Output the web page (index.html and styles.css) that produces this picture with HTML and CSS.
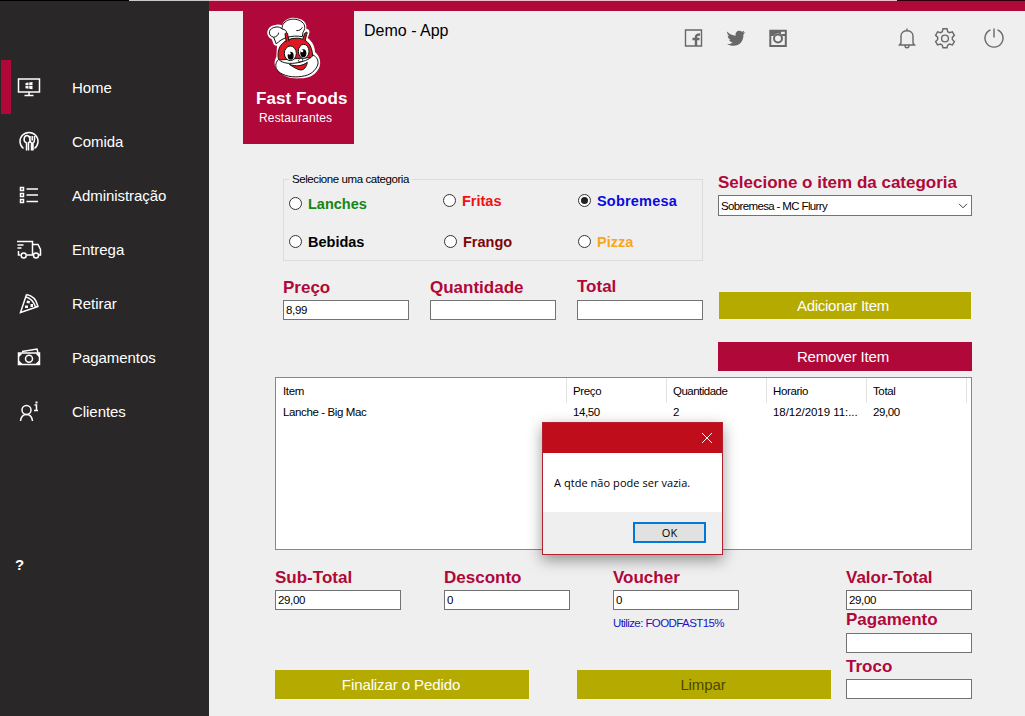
FILE: index.html
```html
<!DOCTYPE html>
<html lang="pt-BR">
<head>
<meta charset="utf-8">
<title>Demo - App</title>
<link rel="stylesheet" href="styles.css">
</head>
<body>
<div class="window-edge"><i class="edge-left"></i><i class="edge-grey"></i><i class="edge-pink"></i><i class="edge-right"></i></div>
<div class="app">
  <nav class="sidebar">
    <a class="nav-item active"><svg viewBox="0 0 26 26"><path d="M2.500 5h21v13h-21zM13 18v3M8.500 21.500h9"/><path class="solid" d="M9.500 9l3-.4v2.700h-3zM13.200 8.500l3.300-.5v3.300h-3.300zM9.500 12h3v2.700l-3-.4zM13.200 12h3.300v3.300l-3.300-.5z"/></svg><span>Home</span></a>
    <a class="nav-item"><svg viewBox="0 0 26 26"><path d="M7.500 20.500A9 9 0 1 1 18.500 20.500M10.500 22.500V15C6.500 13.500 8 7.500 11 7.500s4 6 1.500 7.500v7.500M15.500 22.500V15c-2-1-1.500-3-1.500-7M18.500 8c0 4 .5 6-1.500 7v7.500M16.200 8v4.500"/></svg><span>Comida</span></a>
    <a class="nav-item"><svg viewBox="0 0 26 26"><path d="M4.500 5.500h3v3h-3zM4.500 11.500h3v3h-3zM4.500 17.500h3v3h-3zM10.500 7H22M10.500 13H22M10.500 19.500H22"/></svg><span>Administração</span></a>
    <a class="nav-item"><svg viewBox="0 0 26 26"><path d="M1 5.500h15.500V19H11M1.500 9h6M1.500 12h4M2.500 15v4h2M16.500 8.500h5.500l2.500 5v5.500h-2M16.500 19h1"/><circle cx="7.700" cy="19.500" r="2.500"/><circle cx="20" cy="19.500" r="2.500"/></svg><span>Entrega</span></a>
    <a class="nav-item"><svg viewBox="0 0 26 26"><path d="M10.500 4.500L4.500 22.500 22 16.500M10.500 4.500C16.500 5.500 20.500 10 22 16.500l-2.500.5C18 12 15 8.500 10 7"/><path class="solid" d="M11 10.500l3 .5-.5 2.500-3-.5zM9 15.500h3v2.500h-3zM14.500 14h2.500v3h-2.500z"/></svg><span>Retirar</span></a>
    <a class="nav-item"><svg viewBox="0 0 26 26"><path d="M2.500 9h21v11.500h-21zM6 7.500L21 5l1 4"/><circle cx="13" cy="14.700" r="3.500"/><path class="solid" d="M3 9.500h3.500L3 13zM23 9.500h-3.500l3.500 3.500zM3 20h3.500L3 16.500zM23 20h-3.500l3.500-3.500z"/></svg><span>Pagamentos</span></a>
    <a class="nav-item"><svg viewBox="0 0 26 26"><circle cx="10.500" cy="12" r="4.500"/><path d="M4.500 23c.5-4 3-6.500 6-6.500s5.500 2.500 6 6.500M18.500 7h2v5M18 12.500h4"/><path class="solid" d="M19.500 3.500h2v2h-2z"/></svg><span>Clientes</span></a>
    <div class="help">?</div>
  </nav>
  <main class="main">
    <header class="header">
      <div class="brand">
        <svg class="mascot" viewBox="0 0 198 216">
          <path class="halo" d="M29 76C8 66 13 38 36 34 52 28 60 34 60 34 68 12 91 9 106 13c22 4 29 18 27 31 14 2 10 14 4 28 14 10 22 27 22 42 18 16 20 39 8 55-12 18-33 25-52 24-29 2-52-5-65-22-16-14-14-30-7-43l2-33C32 96 35 86 29 76z"/>
          <path class="red line" d="M50 138c-9-38 14-61 46-65 34-4 56 16 56 57z"/>
          <path class="white line" d="M43 90l-8-20C14 64 20 41 42 39c9-1 15 2 18 6C59 16 99 7 120 24c12 10 9 22 3 31l-2 13C90 62 58 72 43 90z"/>
          <path class="line open" d="M60 45c9 1 13 5 14 11M103 50c8 0 15-3 18-10M35 70c9-2 14-7 15-14"/>
          <path class="red line" d="M73 84l-4-24c2-6 8-5 8 1l4 21M122 77l6-19c6-6 11-2 6 3l-5 20"/>
          <path class="white line" d="M50 136c-12 11-11 26-1 36 15 14 44 20 70 15 25-2 43-17 49-37 1-12-4-22-15-27-6 18-80 39-103 13z"/>
          <ellipse class="white line" cx="85" cy="118" rx="18" ry="22"/><ellipse class="white line" cx="125" cy="112" rx="16" ry="21"/>
          <ellipse cx="86" cy="125" rx="9" ry="12"/><ellipse cx="124" cy="118" rx="9" ry="12"/>
          <circle class="white" cx="82" cy="118" r="4"/><circle class="white" cx="120" cy="111" r="4"/>
          <path class="white line" d="M112 136c-6 4-2 9 5 7s7-7 2-9"/>
          <path class="red line" d="M82 151c20 7 37 6 54-6-3 15-9 22-20 23-12-2-22-9-34-17z"/>
        </svg>
        <strong class="brand-name">Fast Foods</strong>
        <span class="brand-sub">Restaurantes</span>
      </div>
      <div class="title">Demo - App</div>
      <div class="icons social">
        <svg viewBox="0 0 22 22"><path d="M2.500 3h16v16h-16z"/><path class="thick" d="M13 19v-8.500c0-2.500 1-3 4-3M9.500 12h7"/></svg>
        <svg viewBox="0 0 22 22"><path class="solid" d="M2 4.500c2.500 2.600 5.300 4 8.700 4.200C9.800 4.500 14 2.200 17 4.700l2.300-.9-1 2 2-.5-1.900 2.100C18.700 14 14.500 18.700 8.500 18.700c-2.500 0-4.700-.6-6.500-1.800 2.300.2 4.100-.4 5.500-1.500-1.800-.3-2.900-1.200-3.400-2.600h1.600C3.800 12 2.800 10.500 2.700 8.700l1.600.5C2.500 7.500 2 6.200 2 4.500z"/></svg>
        <svg viewBox="0 0 22 22"><path class="frame" d="M3.300 3.800h15.500v15.200H3.300z"/><path class="solid" d="M3 3h11v4h4V3h1v6h-3.500a5 5 0 0 0-9 0H3z"/><circle class="frame" cx="11" cy="11.500" r="4"/></svg>
      </div>
      <div class="icons system">
        <svg viewBox="0 0 22 22"><path d="M5 16V9c0-7 12-7 12 0v7l1.500 2h-15zM11 3.500V1.500M9 18.500c0 3 4 3 4 0"/></svg>
        <svg viewBox="0 0 22 22"><path d="M9 1.800h4l.7 2.900 1.800 1 2.900-.8 2 3.400-2.100 2.100v2l2.100 2.100-2 3.400-2.900-.8-1.800 1-.7 2.700H9l-.7-2.700-1.800-1-2.900.8-2-3.400 2.100-2.100v-2L1.600 8.300l2-3.400 2.900.8 1.800-1z"/><circle cx="11" cy="11.500" r="3.400"/></svg>
        <svg viewBox="0 0 22 22"><path d="M7.500 2.800a9 9 0 1 0 7 0M11 1.500v9"/></svg>
      </div>
    </header>

    <div class="content">
      <section class="order">
        <div class="order-left">
          <fieldset class="categories">
            <legend>Selecione uma categoria</legend>
            <label class="radio green low"><i></i><span>Lanches</span></label>
            <label class="radio red"><i></i><span>Fritas</span></label>
            <label class="radio blue checked"><i></i><span>Sobremesa</span></label>
            <label class="radio black"><i></i><span>Bebidas</span></label>
            <label class="radio maroon"><i></i><span>Frango</span></label>
            <label class="radio orange"><i></i><span>Pizza</span></label>
          </fieldset>
          <div class="fields">
            <div class="field"><label>Preço</label><div class="input">8,99</div></div>
            <div class="field"><label>Quantidade</label><div class="input"></div></div>
            <div class="field raised"><label>Total</label><div class="input"></div></div>
          </div>
        </div>
        <div class="order-right">
          <label class="select-label">Selecione o item da categoria</label>
          <div class="select"><span>Sobremesa - MC Flurry</span><svg viewBox="0 0 10 6"><path d="M1 .8l4 4 4-4"/></svg></div>
          <button class="btn add">Adicionar Item</button>
          <button class="btn remove">Remover Item</button>
        </div>
      </section>

      <section class="list">
        <div class="row head"><span>Item</span><span>Preço</span><span class="qty">Quantidade</span><span>Horario</span><span>Total</span></div>
        <div class="row"><span class="item">Lanche - Big Mac</span><span>14,50</span><span>2</span><span class="date">18/12/2019 11:...</span><span>29,00</span></div>
      </section>

      <section class="payment">
        <div class="payment-left">
          <div class="totals">
            <div class="field"><label>Sub-Total</label><div class="input">29,00</div></div>
            <div class="field"><label>Desconto</label><div class="input">0</div></div>
            <div class="field"><label>Voucher</label><div class="input">0</div><span class="hint">Utilize: FOODFAST15%</span></div>
          </div>
          <div class="actions"><button class="btn">Finalizar o Pedido</button><button class="btn dim">Limpar</button></div>
        </div>
        <div class="payment-right">
          <div class="field"><label>Valor-Total</label><div class="input">29,00</div></div>
          <div class="field pay"><label>Pagamento</label><div class="input"></div></div>
          <div class="field change"><label>Troco</label><div class="input"></div></div>
        </div>
      </section>
    </div>
  </main>
</div>
<div class="dialog">
  <div class="dialog-title"><svg viewBox="0 0 12 12"><path d="M1 1l10 10M11 1L1 11"/></svg></div>
  <div class="dialog-text">A qtde não pode ser vazia.</div>
  <div class="dialog-foot"><button class="ok">OK</button></div>
</div>
</body>
</html>
```
FILE: styles.css
```css
* { box-sizing: border-box; }
body { margin: 0; width: 1025px; height: 716px; overflow: hidden; position: relative; background: #efefef; font-family: "Liberation Sans", Arial, sans-serif; color: #000; }
button { font: inherit; border: 0; padding: 0; border-radius: 0; }
svg { display: block; flex: none; }

.window-edge { display: flex; height: 1px; }
.edge-left { width: 129px; background: #000; }
.edge-grey { width: 80px; background: #c9c9c9; }
.edge-pink { width: 688px; background: #eec0cc; }
.edge-right { flex: 1; background: #2c0009; }
.app { display: flex; height: 715px; }

.sidebar { width: 209px; background: #292728; padding: 59px 0 0 1px; flex: none; }
.nav-item { display: flex; align-items: center; height: 54px; padding-left: 5px; border-left: 10px solid transparent; color: #fff; font-size: 15px; letter-spacing: -.05px; }
.nav-item.active { border-left-color: #b00838; }
.nav-item svg { width: 26px; height: 26px; margin-right: 30px; fill: none; stroke: #fff; stroke-width: 1.5; }
.nav-item .solid { fill: #fff; stroke: none; }
.nav-item span { line-height: 20px; padding-top: 2px; }
.help { margin: 117px 0 0 14px; color: #fff; font-weight: bold; font-size: 15px; line-height: 20px; }

.main { flex: 1; border-top: 10px solid #b00838; }
.header { display: flex; height: 133px; padding-left: 34px; }
.brand { width: 111px; height: 133px; background: #b00838; color: #fff; display: flex; flex-direction: column; padding: 3px 0 0 13px; }
.mascot { width: 66px; height: 72px; margin-left: 6px; }
.mascot .halo { fill: #fff; }
.mascot .red { fill: #df1822; }
.mascot .white { fill: #fff; }
.mascot .line { stroke: #111; stroke-width: 3; }
.mascot .open { fill: none; }
.brand-name { font-size: 17px; line-height: 20px; letter-spacing: .08px; margin-top: 3px; white-space: nowrap; }
.brand-sub { font-size: 12px; line-height: 16px; letter-spacing: .15px; margin: 1px 0 0 3px; }
.title { font-size: 16px; line-height: 20px; margin: 10px 0 0 10px; width: 319px; }
.icons { display: flex; height: 22px; margin-top: 16px; }
.icons svg { width: 22px; height: 22px; fill: none; stroke: #686868; stroke-width: 1.4; }
.icons .solid { fill: #686868; stroke: none; }
.icons .thick { stroke-width: 2.4; }
.icons .frame { stroke-width: 2; }
.social { gap: 20px; width: 213px; }
.system svg:nth-child(2) { margin-left: 16px; }
.system svg:nth-child(3) { margin-left: 27px; }

.content { width: 697px; margin-left: 66px; }
.order { display: flex; height: 233px; padding: 28px 0 0 8px; }
.order-left { width: 420px; margin-right: 15px; }
.categories { margin: 0; padding: 4px 0 0 5px; border: 1px solid #dcdcdc; height: 89px; display: grid; grid-template-columns: 154px 135px 1fr; grid-template-rows: 41px 20px; align-content: start; }
.categories legend { padding: 0 3px; font-size: 11.5px; line-height: 14px; letter-spacing: -.42px; }
.radio { display: flex; align-items: center; height: 20px; font-size: 14.500px; font-weight: bold; }
.radio i { width: 13px; height: 13px; border: 1px solid #333; border-radius: 50%; background: #fff; margin-right: 6px; display: grid; place-items: center; }
.radio.checked i::after { content: ""; width: 7px; height: 7px; border-radius: 50%; background: #222; }
.radio span { padding-top: 2px; }
.green { color: #138613; }
.red { color: #f01014; }
.blue { color: #0a0ae0; letter-spacing: .2px; }
.maroon { color: #7c0508; padding-left: 1px; }
.orange { color: #f9a51d; }
.low { margin-top: 3px; }

.field { width: 126px; display: flex; flex-direction: column; }
.field label, .select-label { display: block; color: #b00838; font-weight: bold; font-size: 17px; line-height: 20px; height: 22px; white-space: nowrap; }
.input { height: 20px; border: 1px solid #737373; background: #fff; font-size: 11.5px; line-height: 18px; padding-left: 2px; letter-spacing: -.35px; }
.fields { display: flex; gap: 21px; margin-top: 17px; }
.raised label { line-height: 18px; }
.order-right { width: 254px; }
.order-right .select-label { height: 23px; line-height: 21px; }
.select { height: 21px; border: 1px solid #737373; background: #fff; display: flex; align-items: center; justify-content: space-between; padding: 0 3px 0 2px; font-size: 11.5px; line-height: 18px; letter-spacing: -.64px; }
.select svg { width: 10px; height: 6px; fill: none; stroke: #444; }
.btn { display: block; height: 29px; width: 254px; padding-right: 2px; background: #b5ab00; color: #fff; font-size: 15px; letter-spacing: -.1px; text-align: center; line-height: 30px; }
.add { width: 252px; height: 27px; line-height: 28px; margin: 76px 0 23px 1px; padding-right: 4px; letter-spacing: -.27px; }
.remove { background: #b00838; padding-right: 4px; letter-spacing: -.17px; }
.dim { color: #4b4700; }

.list { height: 173px; border: 1px solid #828790; background: #fff; font-size: 11.5px; letter-spacing: -.38px; }
.row { display: grid; grid-template-columns: 291px 100px 100px 100px 100px; line-height: 18px; }
.row span { padding-left: 6px; white-space: nowrap; }
.row span:first-child { padding-left: 7px; }
.head span { height: 25px; line-height: 26px; border-right: 1px solid #e2e2e2; }
.list .qty { letter-spacing: -.52px; }
.list .date { letter-spacing: -.05px; }

.payment { display: flex; padding-top: 18px; }
.payment-left { width: 556px; margin-right: 15px; }
.totals { display: flex; gap: 43px; height: 102px; }
.hint { color: #1616c0; font-size: 11.5px; line-height: 18px; letter-spacing: -.59px; margin-top: 4px; white-space: nowrap; }
.actions { display: flex; gap: 48px; }
.pay label { height: 23px; }
.change { margin-top: 4px; }

.dialog { position: absolute; left: 542px; top: 422px; width: 181px; height: 133px; border: 1px solid #b3202e; background: #fff; box-shadow: 0 5px 14px rgba(0,0,0,.4); font-family: "Open Sans", "Noto Sans", sans-serif; font-size: 11px; }
.dialog-title { height: 30px; background: #c00d1c; display: flex; justify-content: flex-end; align-items: center; padding-right: 9px; }
.dialog-title svg { width: 12px; height: 12px; fill: none; stroke: #fff; }
.dialog-text { height: 59px; padding-left: 11px; line-height: 60px; letter-spacing: .05px; white-space: nowrap; }
.dialog-foot { height: 42px; background: #efefef; padding: 10px 0 0 90px; }
.ok { display: block; width: 73px; height: 21px; border: 2px solid #0078d7; background: #e1e1e1; color: #000; line-height: 18px; }
```
